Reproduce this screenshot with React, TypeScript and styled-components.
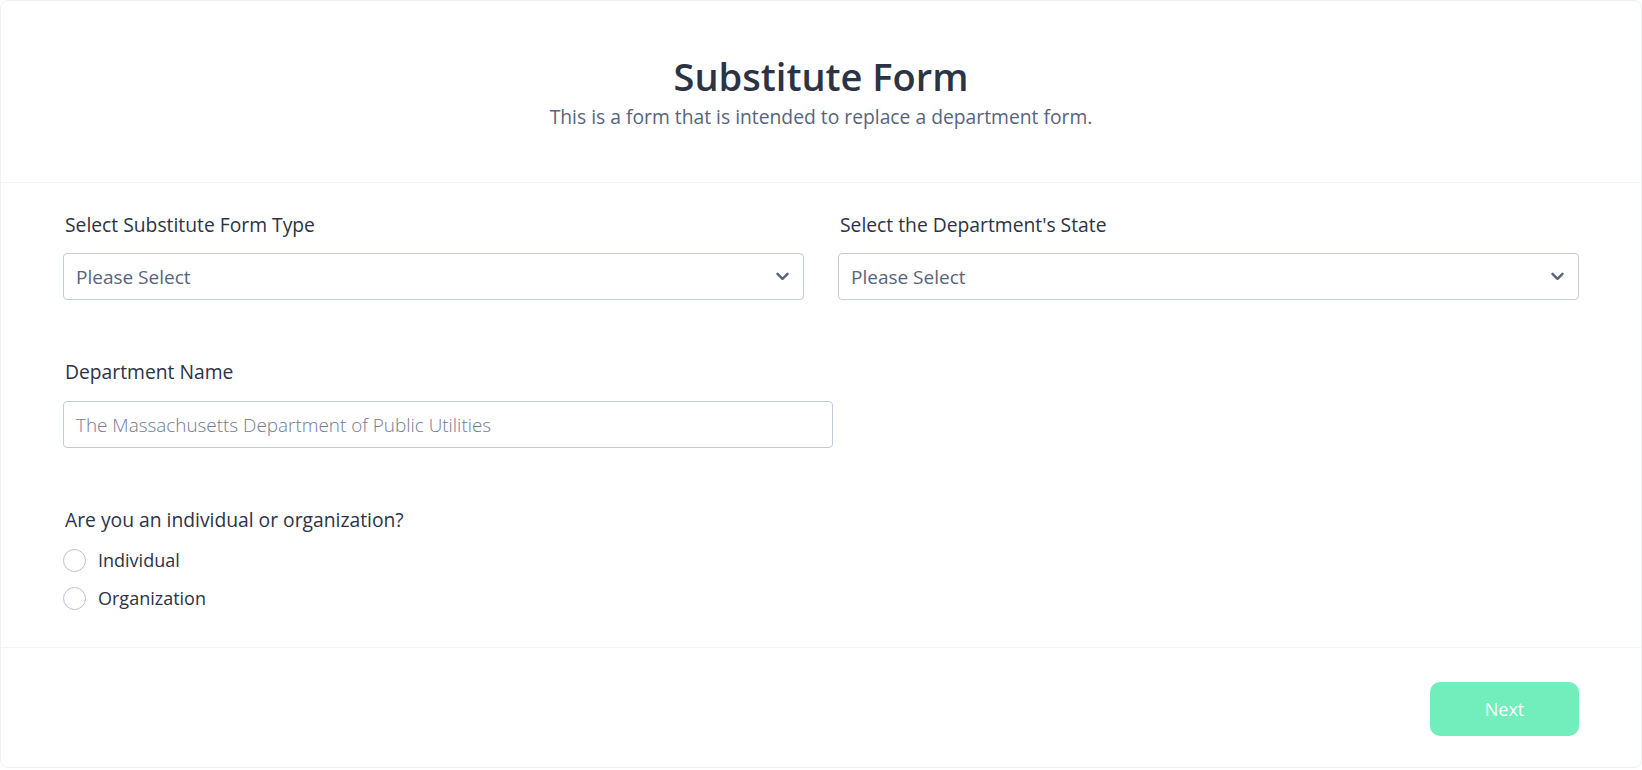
import styled, { createGlobalStyle } from 'styled-components';

const GlobalStyle = createGlobalStyle`
  html, body {
    margin: 0;
    padding: 0;
    background: #ffffff;
    font-family: 'Open Sans', 'Noto Sans', sans-serif;
  }
  * { box-sizing: border-box; }
`;

const Card = styled.form`
  width: 1642px;
  min-height: 768px;
  border: 1px solid #efeff6;
  border-radius: 8px;
  background: #fff;
  display: flex;
  flex-direction: column;
`;

const Header = styled.header`
  padding: 53px 0 53px;
  text-align: center;
  border-bottom: 1px solid #f3f3fb;
`;

const Title = styled.h1`
  margin: 0 0 7px;
  font-size: 38px;
  line-height: 44px;
  font-weight: 600;
  color: #2c3345;
`;

const Subtitle = styled.p`
  margin: 0;
  font-size: 19.3px;
  line-height: 24px;
  color: #57647e;
`;

const Body = styled.div`
  padding: 30px 62px 30px 62px;
  display: flex;
  flex-direction: column;
  gap: 60px;
  border-bottom: 1px solid #f3f3fb;
`;

const Row = styled.div`
  display: grid;
  grid-template-columns: 1fr 1fr;
  gap: 34px;
`;

const Field = styled.div<{ $width?: number; $gap?: number }>`
  display: flex;
  flex-direction: column;
  gap: ${(p) => p.$gap ?? 16}px;
  width: ${(p) => (p.$width ? `${p.$width}px` : 'auto')};
`;

const Label = styled.label`
  font-size: 19.3px;
  line-height: 24px;
  font-weight: 500;
  color: #2c3345;
  padding-left: 2px;
`;

const SelectBox = styled.div`
  height: 47px;
  border: 1px solid #c3cad8;
  border-radius: 4px;
  padding: 0 14px 0 12px;
  display: flex;
  align-items: center;
  justify-content: space-between;
  font-size: 19px;
  color: #57647e;
  background: #fff;
`;

const TextInput = styled.input`
  height: 47px;
  border: 1px solid #c3cad8;
  border-radius: 4px;
  padding: 0 12px;
  font-family: inherit;
  font-size: 18.9px;
  font-weight: 300;
  color: #2c3345;
  outline: none;
  &::placeholder {
    color: #737b90;
  }
`;

const Options = styled.div`
  display: flex;
  flex-direction: column;
  margin-top: -7px;
`;

const Option = styled.label`
  height: 38px;
  display: flex;
  align-items: center;
  gap: 12px;
  font-size: 18px;
  color: #2c3345;
`;

const Radio = styled.span`
  width: 23px;
  height: 23px;
  border: 1px solid #b8bfcf;
  border-radius: 50%;
  background: #fff;
  flex-shrink: 0;
`;

const Footer = styled.footer`
  padding: 34px 62px 31px;
  display: flex;
  justify-content: flex-end;
`;

const NextButton = styled.button`
  width: 149px;
  height: 54px;
  border: none;
  border-radius: 10px;
  background: #71eebb;
  color: #fff;
  font-family: inherit;
  font-size: 18px;
  cursor: pointer;
`;

const Chevron = () => (
  <svg width="13" height="9" viewBox="0 0 13 9" fill="none">
    <path d="M1.5 1.8L6.5 6.8L11.5 1.8" stroke="#57647e" strokeWidth="2.4" strokeLinecap="round" strokeLinejoin="round" />
  </svg>
);

const App = () => {
  return (
    <>
      <GlobalStyle />
      <Card onSubmit={(e) => e.preventDefault()}>
        <Header>
          <Title>Substitute Form</Title>
          <Subtitle>This is a form that is intended to replace a department form.</Subtitle>
        </Header>

        <Body>
          <Row>
            <Field>
              <Label>Select Substitute Form Type</Label>
              <SelectBox>
                <span>Please Select</span>
                <Chevron />
              </SelectBox>
            </Field>
            <Field>
              <Label>Select the Department's State</Label>
              <SelectBox>
                <span>Please Select</span>
                <Chevron />
              </SelectBox>
            </Field>
          </Row>

          <Field $width={770} $gap={17}>
            <Label>Department Name</Label>
            <TextInput placeholder='The Massachusetts Department of Public Utilities' />
          </Field>

          <Field>
            <Label>Are you an individual or organization?</Label>
            <Options>
              <Option>
                <Radio />
                Individual
              </Option>
              <Option>
                <Radio />
                Organization
              </Option>
            </Options>
          </Field>
        </Body>

        <Footer>
          <NextButton type='button'>Next</NextButton>
        </Footer>
      </Card>
    </>
  );
};

export default App;
